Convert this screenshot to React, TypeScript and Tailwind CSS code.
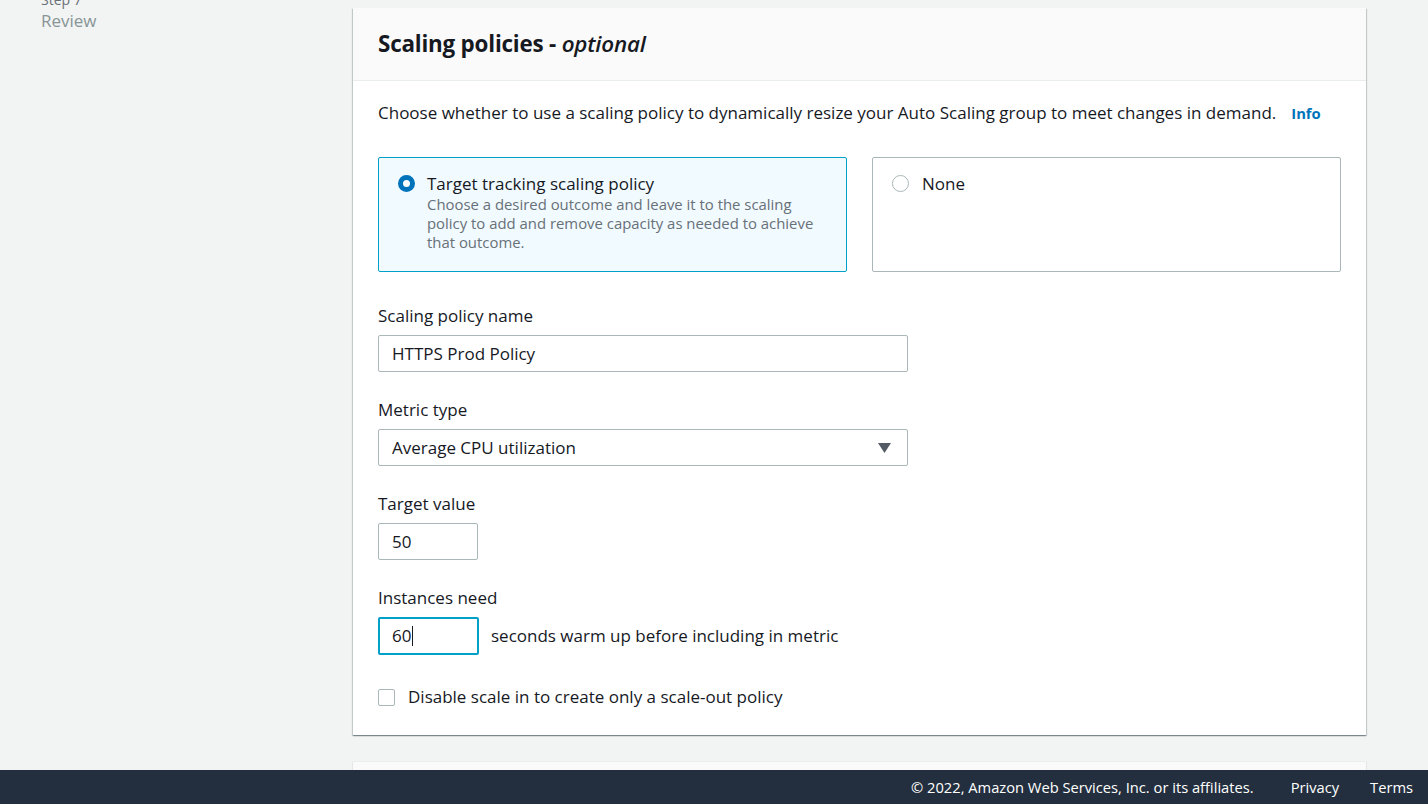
import React from "react";

export default function App() {
  const font = { fontFamily: '"Open Sans", "Noto Sans", sans-serif' };
  return (
    <div className="relative h-[804px] w-[1428px] overflow-hidden bg-[#f2f3f3] text-[#16191f]" style={font}>
      <div className="flex">
        <div className="w-[353px] shrink-0 pl-[41px]">
          <div className="-mt-[10px] text-[14px] leading-[20px] text-[#687078]">Step 7</div>
          <div className="text-[17px] leading-[22px] text-[#879596]">Review</div>
        </div>
        <div className="w-[1013px] shrink-0 pt-[8px]">
          <div className="bg-white shadow-[0_1px_1px_0_rgba(0,28,36,0.3),1px_1px_1px_0_rgba(0,28,36,0.15),-1px_1px_1px_0_rgba(0,28,36,0.15)]">
            <div className="flex h-[73px] items-center border-b border-[#eaeded] bg-[#fafafa] px-[25px]">
              <h2 className="text-[22.4px] font-bold leading-[28px] tracking-[-0.2px]">
                Scaling policies - <i className="font-semibold">optional</i>
              </h2>
            </div>
            <div className="px-[25px] pb-[26px] pt-[20px]">
              <p className="flex items-center text-[17px] leading-[24px]">
                Choose whether to use a scaling policy to dynamically resize your Auto Scaling group to meet changes in demand.
                <span className="ml-[15px] text-[14.8px] font-bold text-[#0073bb]">Info</span>
              </p>
              <div className="mt-[32px] grid grid-cols-2 gap-[25px]">
                <div className="flex h-[115px] items-start gap-[12px] rounded-[2px] border border-[#00a1c9] bg-[#f1faff] px-[19px] pt-[14px]">
                  <span className="mt-[3px] h-[17px] w-[17px] shrink-0 rounded-full border-[5px] border-[#0073bb] bg-white" />
                  <div>
                    <div className="text-[17px] leading-[23px]">Target tracking scaling policy</div>
                    <div className="text-[14.9px] leading-[19px] text-[#687078]">
                      Choose a desired outcome and leave it to the scaling policy to add and remove capacity as needed to achieve that outcome.
                    </div>
                  </div>
                </div>
                <div className="flex h-[115px] items-start gap-[13px] rounded-[2px] border border-[#aab7b8] bg-white px-[19px] pt-[14px]">
                  <span className="mt-[3px] h-[17px] w-[17px] shrink-0 rounded-full border border-[#aab7b8] bg-white" />
                  <div className="text-[17px] leading-[23px]">None</div>
                </div>
              </div>

              <div className="mt-[32px] text-[17px] leading-[24px]">Scaling policy name</div>
              <div className="mt-[7px] flex h-[37px] w-[530px] items-center rounded-[2px] border border-[#aab7b8] bg-white px-[13px] text-[17px]">
                HTTPS Prod Policy
              </div>

              <div className="mt-[26px] text-[17px] leading-[24px]">Metric type</div>
              <div className="mt-[7px] flex h-[37px] w-[530px] items-center justify-between rounded-[2px] border border-[#aab7b8] bg-white pl-[13px] pr-[16px] text-[17px]">
                <span>Average CPU utilization</span>
                <svg width="13" height="10" viewBox="0 0 13 10">
                  <path d="M0 0 H13 L6.5 10 Z" fill="#545b64" />
                </svg>
              </div>

              <div className="mt-[26px] text-[17px] leading-[24px]">Target value</div>
              <div className="mt-[7px] flex h-[37px] w-[100px] items-center rounded-[2px] border border-[#aab7b8] bg-white px-[13px] text-[17px]">
                50
              </div>

              <div className="mt-[26px] text-[17px] leading-[24px]">Instances need</div>
              <div className="mt-[7px] flex items-center gap-[12px]">
                <div className="flex h-[38px] w-[101px] items-center rounded-[2px] border-2 border-[#00a1c9] bg-white px-[12px] text-[17px]">
                  60<span className="ml-[1px] h-[20px] w-[1px] bg-[#16191f]" />
                </div>
                <span className="text-[17px]">seconds warm up before including in metric</span>
              </div>

              <div className="mt-[30px] flex items-center gap-[13px]">
                <span className="h-[17px] w-[17px] rounded-[2px] border border-[#aab7b8] bg-white" />
                <span className="text-[17px] leading-[24px]">Disable scale in to create only a scale-out policy</span>
              </div>
            </div>
          </div>
          <div className="mt-[26px] h-[60px] border-t border-[#eaeded] bg-[#fafafa] shadow-[0_1px_1px_0_rgba(0,28,36,0.3)]" />
        </div>
      </div>
      <div className="absolute bottom-0 left-0 flex h-[34px] w-full items-center justify-end bg-[#232f3e] pr-[15px] text-[14.7px] text-white" style={{ fontFamily: '"Open Sans", sans-serif' }}>
        <span>© 2022, Amazon Web Services, Inc. or its affiliates.</span>
        <span className="ml-[37px]">Privacy</span>
        <span className="ml-[31px]">Terms</span>
      </div>
    </div>
  );
}
